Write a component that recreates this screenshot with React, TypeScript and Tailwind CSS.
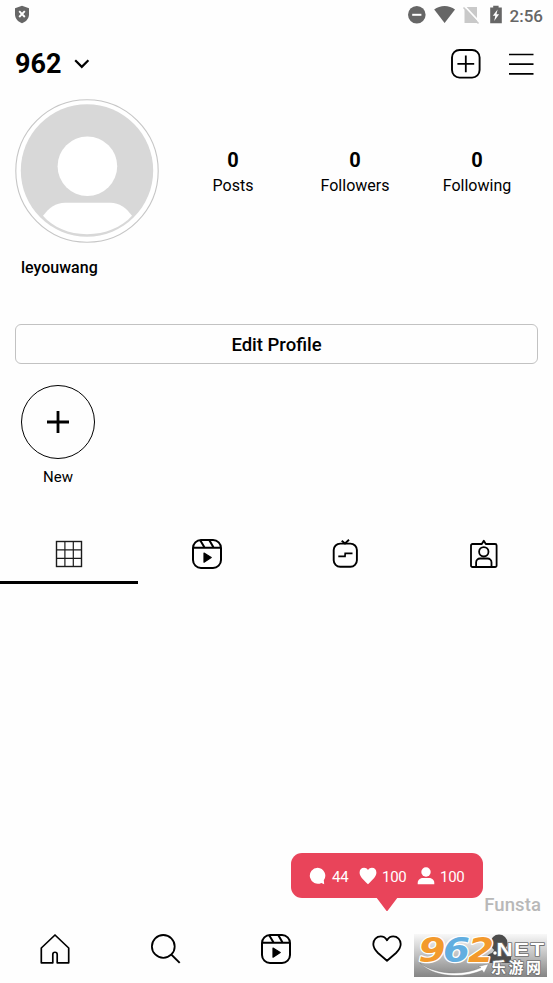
import type { ReactNode } from 'react';

const STATS = [
  { label: 'Posts', value: 0 },
  { label: 'Followers', value: 0 },
  { label: 'Following', value: 0 },
];

function StatusBar() {
  return (
    <div className="flex h-[30px] items-center justify-between pr-[10px] pl-[14px] text-[#666]">
      <svg className="-mt-px" width="16" height="19" viewBox="0 0 16 19" aria-hidden>
        <path d="M8 0.8 15 3.3v6c0 4.2-2.9 7.7-7 8.9-4.1-1.2-7-4.7-7-8.9v-6z" fill="currentColor" />
        <path d="m5.2 6.2 5.6 5.8m0-5.8-5.6 5.8" stroke="#fff" strokeWidth="1.9" />
      </svg>
      <div className="flex items-center">
        <svg width="100" height="24" viewBox="404 3 100 24" aria-hidden>
          <circle cx="415.8" cy="14.8" r="8.8" fill="currentColor" />
          <path d="M411.2 14.8h9.2" stroke="#fff" strokeWidth="2" />
          <path d="M433.2 9.6c5.8-4.7 15-4.7 20.8 0L443.6 23z" fill="currentColor" />
          <path d="M466.2 7H476v16h-12.5V9.7z" fill="#c9c9c9" />
          <path d="m463.6 6.2 15 16" stroke="#fefefe" strokeWidth="1.7" />
          <path d="m462.5 7.6 15 16" stroke="#c9c9c9" strokeWidth="1.5" />
          <path d="M489.2 7.6h3V5.8h5.4v1.8h3.2v15.6h-11.6z" fill="currentColor" />
          <path d="m496.6 9.5-4.8 6.3h2.5l-1.1 5.2 4.9-6.7h-2.6z" fill="#fff" />
        </svg>
        <span className="ml-[5px] pt-px text-[17px] leading-6 font-medium">2:56</span>
      </div>
    </div>
  );
}

function Header() {
  return (
    <header className="flex h-[67px] items-center justify-between pr-[19px] pl-[15px]">
      <button type="button" className="flex items-center gap-[13px]">
        <span className="text-[27px] leading-8 font-bold">962</span>
        <svg width="16" height="10" viewBox="0 0 16 10" fill="none" aria-hidden>
          <path d="m1.2 1.3 6.6 6.6 6.6-6.6" stroke="currentColor" strokeWidth="2.2" />
        </svg>
      </button>
      <div className="flex items-center gap-[27px]">
        <svg width="30" height="30" viewBox="0 0 30 30" fill="none" stroke="currentColor" aria-label="Create">
          <rect x="1" y="1" width="27.6" height="27.6" rx="7.5" strokeWidth="1.9" />
          <path d="M14.8 6.5v16.8M6.4 14.9h16.8" strokeWidth="1.8" />
        </svg>
        <svg width="26" height="24" viewBox="0 0 26 24" stroke="currentColor" strokeWidth="1.7" aria-label="Menu">
          <path d="M1 2.5h24.5M1 12.2h24.5M1 21.8h24.5" />
        </svg>
      </div>
    </header>
  );
}

function Avatar() {
  return (
    <svg className="shrink-0" width="144" height="144" viewBox="0 0 144 144" aria-label="Profile photo">
      <circle cx="72" cy="72" r="71.2" fill="#fff" stroke="#c6c6c6" strokeWidth="1.1" />
      <circle cx="72" cy="71.5" r="66.2" fill="#d8d8d8" />
      <circle cx="72.4" cy="67.2" r="29.8" fill="#fff" />
      <path d="M28 116.8c6.2-8 12.8-13 22-13h45.5c8.8 0 15.5 5 21.5 13C106.5 128.5 90.2 135.2 72 135.2S38.2 128.5 28 116.8z" fill="#fff" />
    </svg>
  );
}

function GridIcon() {
  return (
    <svg width="30" height="30" viewBox="0 0 30 30" fill="none" stroke="#1b1b1b" aria-hidden>
      <rect x="2.5" y="2.5" width="25" height="25" strokeWidth="1.4" />
      <path d="M10.9 2.5v25M19.3 2.5v25M2.5 10.9h25M2.5 19.3h25" strokeWidth="1.2" />
    </svg>
  );
}

function ReelsIcon() {
  return (
    <svg width="30" height="30" viewBox="0 0 30 30" fill="none" stroke="currentColor" strokeWidth="2" aria-hidden>
      <rect x="1" y="1" width="28" height="28" rx="8" />
      <path d="M1 8.8h28M8.2 1.3l4.5 7.5M17.2 1l4.5 7.8" />
      <path d="m12 14 7.2 4.6-7.2 4.6z" fill="currentColor" strokeWidth="1.2" strokeLinejoin="round" />
    </svg>
  );
}

function IgtvIcon() {
  return (
    <svg width="30" height="30" viewBox="0 0 30 30" fill="none" stroke="currentColor" strokeWidth="1.9" aria-hidden>
      <rect x="2.7" y="4.6" width="23.2" height="23.2" rx="6.5" />
      <path d="m10.700 1.7 3.300 2.800 4-3.700" />
      <path d="M7.300 17.400H14l.2-3.100h7.300" strokeWidth="1.700" />
    </svg>
  );
}

function TaggedIcon() {
  return (
    <svg width="30" height="30" viewBox="0 0 30 30" fill="none" stroke="currentColor" strokeWidth="1.8" strokeLinejoin="round" aria-hidden>
      <path d="M3.5 5h9.300l2-3.300L16.800 5h9.300a1.500 1.500 0 0 1 1.500 1.500v20A1.500 1.500 0 0 1 26.100 28H3.500A1.500 1.500 0 0 1 2 26.500v-20A1.500 1.500 0 0 1 3.500 5z" />
      <circle cx="14.8" cy="12.8" r="4.7" />
      <path d="M7.1 28v-4.5a4 4 0 0 1 4-4h7.400a4 4 0 0 1 4 4V28" />
    </svg>
  );
}

function HomeIcon() {
  return (
    <svg width="30" height="30" viewBox="0 0 30 30" fill="none" stroke="currentColor" strokeWidth="1.7" strokeLinejoin="round" aria-hidden>
      <path d="M1.3 14 15 1l13.7 13v14.8H17.2v-8.3c0-3-4.400-3-4.400 0v8.300H1.300z" />
    </svg>
  );
}

function SearchIcon() {
  return (
    <svg width="30" height="30" viewBox="0 0 30 30" fill="none" stroke="currentColor" strokeWidth="1.8" aria-hidden>
      <circle cx="12.3" cy="12.4" r="11.4" />
      <path d="m20.4 20.6 8.300 8.300" strokeWidth="2" />
    </svg>
  );
}

function HeartIcon() {
  return (
    <svg width="30" height="30" viewBox="0 0 30 30" fill="none" stroke="currentColor" strokeWidth="1.8" strokeLinejoin="round" aria-hidden>
      <path d="M15 6.3C16.5 3.6 18.6 2.4 21.2 2.4c4.3 0 7.5 3.3 7.5 7.7 0 4-2 6.3-4.7 8.9L15 26.7 6 19c-2.7-2.6-4.7-4.9-4.7-8.9 0-4.4 3.2-7.7 7.5-7.7 2.6 0 4.7 1.2 6.2 3.9z" />
    </svg>
  );
}

const TABS: { id: string; icon: ReactNode }[] = [
  { id: 'grid', icon: <GridIcon /> },
  { id: 'reels', icon: <ReelsIcon /> },
  { id: 'igtv', icon: <IgtvIcon /> },
  { id: 'tagged', icon: <TaggedIcon /> },
];

const NAV: { id: string; icon: ReactNode }[] = [
  { id: 'home', icon: <HomeIcon /> },
  { id: 'search', icon: <SearchIcon /> },
  { id: 'reels', icon: <ReelsIcon /> },
  { id: 'activity', icon: <HeartIcon /> },
];

// Balloon that hangs above the activity icon
function ActivityBubble() {
  return (
    <div className="absolute top-[853px] left-[291px] flex h-[45px] w-[192px] items-center rounded-[11px] bg-[#e9445a] pl-[18px] text-[15px] text-white">
      <svg width="18" height="18" viewBox="0 0 18 18" fill="currentColor" aria-hidden>
        <path d="M8.7.7a8 8 0 1 0 3.600 15.200l2.900 1.400-.4-4A8 8 0 0 0 8.700.7z" />
      </svg>
      <div className="ml-[5px] w-[27px] pt-[2px] leading-5 tracking-[-0.3px]">44</div>
      <svg width="18" height="18" viewBox="0 0 18 18" fill="currentColor" aria-hidden>
        <path d="M9 3C10 1.4 11.3.7 12.9.7c2.600 0 4.500 2 4.500 4.800 0 3.900-3.100 6.800-8.400 11.700C3.700 12.300.6 9.400.6 5.500.6 2.700 2.500.7 5.100.7 6.700.7 8 1.400 9 3z" />
      </svg>
      <div className="ml-[5px] w-[35px] pt-[2px] leading-5 tracking-[-0.3px]">100</div>
      <svg width="18" height="18" viewBox="0 0 18 18" fill="currentColor" aria-hidden>
        <circle cx="9" cy="5" r="4.7" />
        <path d="M.7 17.2v-1.300c0-3.300 2.700-5 5.300-5h6c2.600 0 5.300 1.700 5.300 5v1.300z" />
      </svg>
      <div className="ml-[5px] pt-[2px] leading-5 tracking-[-0.3px]">100</div>
      <svg className="absolute top-[44px] left-[85px]" width="22" height="14" viewBox="0 0 22 14" aria-hidden>
        <path d="M0 0h22L11.8 13.4a1 1 0 0 1-1.6 0z" fill="#e9445a" />
      </svg>
    </div>
  );
}

function SiteBadge() {
  return (
    <div className="absolute top-[934px] left-[414px] h-[43px] w-[133px] bg-linear-to-b from-[#f8f8f8] via-[#c0c0c0] to-[#858585]">
      <svg className="overflow-visible" width="133" height="43" viewBox="0 0 133 43" aria-hidden>
        <g fill="#4c4c4c">
          <circle cx="85" cy="9" r="8.5" />
          <path d="M71 29c0-5 3-9 7-10l3-4h9l7 6v8z" />
        </g>
        <g
          fontFamily="'DejaVu Sans', sans-serif"
          fontSize="34"
          fontWeight="700"
          fontStyle="italic"
          stroke="#fff"
          strokeWidth="2.4"
          strokeLinejoin="round"
          paintOrder="stroke"
        >
          <text x="4.500" y="27.500" textLength="27" lengthAdjust="spacingAndGlyphs" fill="#f39a2d">9</text>
          <text x="29" y="27.500" textLength="27" lengthAdjust="spacingAndGlyphs" fill="#62aee0">6</text>
          <text x="54" y="27.500" textLength="26" lengthAdjust="spacingAndGlyphs" fill="#f39a2d">2</text>
        </g>
        <path d="M6 29c15 12 43 13 61 4.500l-3-1L74.500 30 70 39l-1.800-2.700C48 45 19 43 6 29z" fill="#fff" stroke="#777" strokeWidth=".4" />
        <circle cx="81" cy="19" r="1.8" fill="#fff" />
        <g fill="#fff" stroke="#707070" strokeWidth="1.6" strokeLinejoin="round" paintOrder="stroke" fontWeight="700">
          <text x="82.500" y="21.500" textLength="49" lengthAdjust="spacingAndGlyphs" fontFamily="'Liberation Sans', sans-serif" fontSize="19" letterSpacing="1.200">
            NET
          </text>
          <text x="77" y="38.500" textLength="50" lengthAdjust="spacing" fontFamily="'Noto Sans CJK SC', sans-serif" fontSize="15">
            乐游网
          </text>
        </g>
      </svg>
    </div>
  );
}

export default function App() {
  return (
    <div className="relative flex h-[983px] w-[553px] flex-col overflow-hidden bg-[#fefefe] font-[Roboto,sans-serif] text-black">
      <StatusBar />
      <Header />

      <section className="mt-[2px] flex items-center px-[15px]">
        <Avatar />
        <div className="ml-[13px] grid flex-1 grid-cols-3 pt-[3px] text-center">
          {STATS.map((stat) => (
            <div key={stat.label} className="flex flex-col">
              <span className="text-[20px] leading-6 font-bold">{stat.value}</span>
              <span className="mt-[2px] text-[16px] leading-6">{stat.label}</span>
            </div>
          ))}
        </div>
      </section>
      <p className="mt-[15px] px-[21px] text-[16px] leading-5 font-medium">leyouwang</p>

      <button
        type="button"
        className="mx-[15px] mt-[46px] h-10 shrink-0 rounded-[6px] border border-[#c2c2c2] pt-[3px] text-[18.5px] font-medium"
      >
        Edit Profile
      </button>

      <div className="mt-[21px] ml-[21px] flex w-[74px] flex-col items-center">
        <button type="button" className="flex size-[74px] items-center justify-center rounded-full border border-black">
          <svg width="22" height="22" viewBox="0 0 22 22" stroke="currentColor" strokeWidth="2.8" aria-label="New highlight">
            <path d="M11 0v22M0 11h22" />
          </svg>
        </button>
        <span className="mt-2 text-[15px] leading-5">New</span>
      </div>

      <div className="mt-[41px] grid grid-cols-4">
        {TABS.map((tab, i) => (
          <button
            key={tab.id}
            type="button"
            className={`flex h-14 items-center justify-center border-b-3 pb-px ${i === 0 ? 'border-black' : 'border-transparent'}`}
          >
            {tab.icon}
          </button>
        ))}
      </div>

      <div className="mt-auto mr-[12px] self-end text-[18.5px] leading-6 font-medium tracking-[0.1px] text-[#b8b8b8]">Funsta</div>
      <nav className="mb-[3px] grid h-[63px] shrink-0 grid-cols-5 items-center">
        {NAV.map((item) => (
          <button key={item.id} type="button" className="flex justify-center">
            {item.icon}
          </button>
        ))}
      </nav>

      <ActivityBubble />
      <SiteBadge />
    </div>
  );
}
